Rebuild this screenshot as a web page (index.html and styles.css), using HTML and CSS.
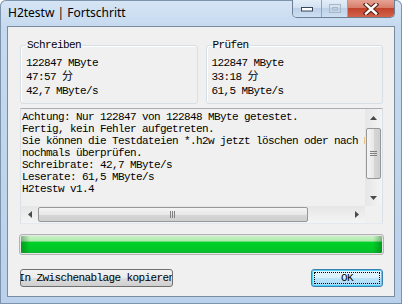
FILE: index.html
```html
<!DOCTYPE html>
<html lang="de">
<head>
    <meta charset="UTF-8">
    <title>H2testw | Fortschritt</title>
    <link rel="stylesheet" href="styles.css">
</head>
<body>
    <div class="window">
        <div class="titlebar">
            <span class="title">H2testw | Fortschritt</span>
            <div class="caption-buttons">
                <div class="cap cap-min">
                    <svg width="14" height="8" viewBox="0 0 14 8"><rect x="1.5" y="2.5" width="11" height="3.5" fill="#fff" stroke="#39485a" stroke-width="1"/></svg>
                </div>
                <div class="cap cap-max">
                    <svg width="14" height="11" viewBox="0 0 14 11"><rect x="1.5" y="1.5" width="11" height="8" fill="none" stroke="#a9b6c4" stroke-width="1"/><rect x="4.5" y="4.5" width="5" height="2.5" fill="none" stroke="#a9b6c4" stroke-width="1"/></svg>
                </div>
                <div class="cap cap-close">
                    <svg width="16" height="12" viewBox="0 0 16 12"><path d="M3 1.5 L13 10.5 M13 1.5 L3 10.5" stroke="#5a1f16" stroke-width="4.5" stroke-linecap="square"/><path d="M3 1.5 L13 10.5 M13 1.5 L3 10.5" stroke="#fff" stroke-width="2.4" stroke-linecap="square"/></svg>
                </div>
            </div>
        </div>

        <div class="client">
            <div class="groups">
                <fieldset class="group">
                    <legend>Schreiben</legend>
                    <div class="line">122847 MByte</div>
                    <div class="line">47:57 分</div>
                    <div class="line">42,7 MByte/s</div>
                </fieldset>
                <fieldset class="group">
                    <legend>Prüfen</legend>
                    <div class="line">122847 MByte</div>
                    <div class="line">33:18 分</div>
                    <div class="line">61,5 MByte/s</div>
                </fieldset>
            </div>

            <div class="memo">
                <div class="memo-text">Achtung: Nur 122847 von 122848 MByte getestet.
Fertig, kein Fehler aufgetreten.
Sie können die Testdateien *.h2w jetzt löschen oder nach Belieben
nochmals überprüfen.
Schreibrate: 42,7 MByte/s
Leserate: 61,5 MByte/s
H2testw v1.4</div>
                <div class="vscroll">
                    <div class="arrow">
                        <svg width="7" height="4" viewBox="0 0 7 4"><path d="M3.5 0 L7 4 L0 4 Z" fill="#4a4a4a"/></svg>
                    </div>
                    <div class="vtrack">
                        <div class="vthumb">
                            <svg width="7" height="6" viewBox="0 0 7 6"><path d="M0 0.5 H7 M0 2.5 H7 M0 4.5 H7" stroke="#808080" stroke-width="1"/></svg>
                        </div>
                    </div>
                    <div class="arrow">
                        <svg width="7" height="4" viewBox="0 0 7 4"><path d="M0 0 L7 0 L3.5 4 Z" fill="#4a4a4a"/></svg>
                    </div>
                </div>
                <div class="hscroll">
                    <div class="arrow">
                        <svg width="4" height="7" viewBox="0 0 4 7"><path d="M4 0 L4 7 L0 3.5 Z" fill="#4a4a4a"/></svg>
                    </div>
                    <div class="htrack">
                        <div class="hthumb">
                            <svg width="6" height="7" viewBox="0 0 6 7"><path d="M0.5 0 V7 M2.5 0 V7 M4.5 0 V7" stroke="#808080" stroke-width="1"/></svg>
                        </div>
                    </div>
                    <div class="arrow">
                        <svg width="4" height="7" viewBox="0 0 4 7"><path d="M0 0 L4 3.5 L0 7 Z" fill="#4a4a4a"/></svg>
                    </div>
                </div>
                <div class="corner"></div>
            </div>

            <div class="progress">
                <div class="progress-fill"></div>
            </div>

            <div class="buttons">
                <div class="btn btn-copy"><span>In Zwischenablage kopieren</span></div>
                <div class="btn btn-ok"><span class="focus">OK</span></div>
            </div>
        </div>
    </div>
</body>
</html>
```

FILE: styles.css
```css
body {
    margin: 0;
    font-family: "Liberation Mono", "Noto Sans CJK SC", monospace;
    font-size: 11px;
}

.window {
    width: 402px;
    height: 304px;
    box-sizing: border-box;
    display: flex;
    flex-direction: column;
    padding: 0 7px 7px 7px;
    background: linear-gradient(to bottom, #d6e5f5 0, #c6daef 26px, #b9d1ea 100%);
    border-radius: 6px 6px 0 0;
    box-shadow: inset 0 0 0 1px #7d94ad;
}

/* title bar */

.titlebar {
    height: 26px;
    flex: none;
    display: flex;
    justify-content: space-between;
    align-items: flex-start;
}

.title {
    font-family: "Segoe UI", "Noto Sans", sans-serif;
    font-size: 12px;
    line-height: 16px;
    margin-top: 5px;
    margin-left: 1px;
    color: #000;
}

.caption-buttons {
    display: flex;
    height: 17px;
    border: 1px solid #6c7f94;
    border-top: none;
    border-radius: 0 0 5px 5px;
    overflow: hidden;
}

.cap {
    display: flex;
    justify-content: center;
    align-items: center;
    border-right: 1px solid #8fa4bb;
    background: linear-gradient(to bottom, #e3edf8 0, #d2e1f1 45%, #bcd0e8 50%, #cddff2 100%);
}

.cap-min {
    width: 28px;
}

.cap-max {
    width: 25px;
}

.cap-close {
    width: 46px;
    border-right: none;
    background: linear-gradient(to bottom, #e6a392 0, #d67f6b 45%, #c2442c 50%, #d3624a 100%);
}

/* client area */

.client {
    flex: 1;
    display: flex;
    flex-direction: column;
    background: #f0f0f0;
    border: 1px solid #7a8ca0;
    padding: 12px 11px 0 12px;
}

.groups {
    display: grid;
    grid-template-columns: 1fr 1fr;
    column-gap: 8px;
}

.group {
    margin: 0;
    min-width: 0;
    padding: 5px 0 5px 5px;
    border: 1px solid #d5dfe5;
    border-radius: 3px;
    box-shadow: inset 1px 1px 0 #fff;
}

.group legend {
    padding: 0 1px;
    line-height: 12px;
}

.line {
    line-height: 14px;
    letter-spacing: -0.6px;
}

.group legend {
    letter-spacing: -0.6px;
}

/* read-only memo */

.memo {
    margin-top: 4px;
    height: 116px;
    box-sizing: border-box;
    display: grid;
    grid-template-columns: 1fr 17px;
    grid-template-rows: 1fr 17px;
    border: 1px solid #dbdfe6;
    border-top-color: #abadb3;
    border-bottom-color: #e3e9ef;
    background: #f0f0f0;
}

.memo-text {
    padding: 2px 0 0 1px;
    line-height: 12px;
    letter-spacing: -0.6px;
    white-space: pre;
    overflow: hidden;
}

.vscroll {
    display: flex;
    flex-direction: column;
    background: linear-gradient(to right, #e6e6e6, #f4f4f4);
}

.hscroll {
    display: flex;
    background: linear-gradient(to bottom, #e6e6e6, #f4f4f4);
}

.arrow {
    width: 17px;
    height: 17px;
    flex: none;
    display: flex;
    justify-content: center;
    align-items: center;
}

.vtrack {
    flex: 1;
    padding: 2px 0 10px;
    display: flex;
}

.vthumb {
    flex: 1;
    margin: 0 1px;
    display: flex;
    justify-content: center;
    align-items: center;
    border: 1px solid #979797;
    border-radius: 2px;
    background: linear-gradient(to right, #f4f4f4 0, #e8e8e8 50%, #d6d6d6 51%, #cfcfcf 100%);
}

.htrack {
    flex: 1;
    display: flex;
    padding-right: 40px;
}

.hthumb {
    flex: 1;
    margin: 1px 0;
    display: flex;
    justify-content: center;
    align-items: center;
    border: 1px solid #979797;
    border-radius: 2px;
    background: linear-gradient(to bottom, #f4f4f4 0, #e8e8e8 50%, #d6d6d6 51%, #cfcfcf 100%);
}

.corner {
    background: #f0f0f0;
}

/* progress bar */

.progress {
    margin: 10px -1px 0;
    height: 21px;
    box-sizing: border-box;
    border: 1px solid #b2b2b2;
    border-radius: 3px;
    background: #e6e6e6;
    padding: 1px;
}

.progress-fill {
    height: 100%;
    border-radius: 1px;
    background:
        linear-gradient(to right, rgba(0, 70, 10, 0.35) 0, rgba(0, 70, 10, 0) 9px, rgba(0, 70, 10, 0) calc(100% - 9px), rgba(0, 70, 10, 0.35) 100%),
        linear-gradient(to bottom, #c9f3c6 0, #aeeaaa 30%, #00d028 36%, #00c826 80%, #12b434 100%);
}

/* buttons */

.buttons {
    margin-top: 14px;
    display: flex;
    justify-content: space-between;
}

.btn {
    height: 18px;
    box-sizing: border-box;
    display: flex;
    justify-content: center;
    align-items: center;
    overflow: hidden;
    white-space: nowrap;
    border: 1px solid #707070;
    border-radius: 3px;
    background: linear-gradient(to bottom, #f2f2f2 0, #ebebeb 50%, #dddddd 51%, #cfcfcf 100%);
    letter-spacing: -0.6px;
}

.btn-copy {
    width: 153px;
}

.btn-ok {
    width: 72px;
    border-color: #3c7fb1;
    box-shadow: inset 0 0 0 1px #48d4f8;
    background: linear-gradient(to bottom, #eaf6fd 0, #d9f0fc 50%, #bee6fd 51%, #a7d9f5 100%);
    padding: 2px;
}

.focus {
    flex: 1;
    align-self: stretch;
    display: flex;
    justify-content: center;
    align-items: center;
    border: 1px dotted #000;
}
```
